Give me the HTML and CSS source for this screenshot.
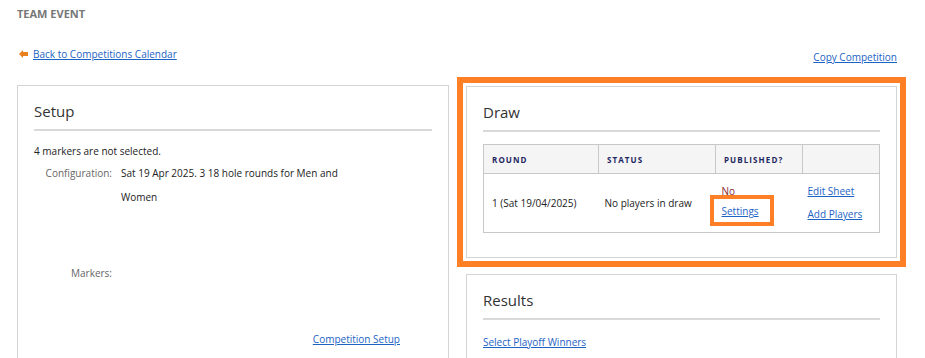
FILE: index.html
```html
<!DOCTYPE html>
<html lang="en">

<head>
    <meta charset="UTF-8">
    <title>Team Event</title>
    <link rel="stylesheet" href="styles.css">
</head>

<body>
    <div class="page">
        <h1 class="page-title">TEAM EVENT</h1>

        <div class="nav-row">
            <a class="back-link" href="#">
                <svg class="back-arrow" width="9" height="8" viewBox="0 0 9 8">
                    <polygon points="0,4 4,0 4,2 9,2 9,6 4,6 4,8" fill="#e8801f" />
                </svg><span>Back to Competitions Calendar</span>
            </a>
            <a class="copy-link" href="#">Copy Competition</a>
        </div>

        <div class="columns">
            <div class="panel setup">
                <h2>Setup</h2>
                <p class="note">4 markers are not selected.</p>
                <div class="field">
                    <div class="label">Configuration:</div>
                    <div class="value">Sat 19 Apr 2025. 3 18 hole rounds for Men and Women</div>
                </div>
                <div class="field markers">
                    <div class="label">Markers:</div>
                    <div class="value"></div>
                </div>
                <div class="panel-foot">
                    <a href="#">Competition Setup</a>
                </div>
            </div>

            <div class="side">
                <div class="panel draw highlighted">
                    <h2>Draw</h2>
                    <table class="draw-table">
                        <thead>
                            <tr>
                                <th class="c-round">Round</th>
                                <th class="c-status">Status</th>
                                <th class="c-pub">Published?</th>
                                <th class="c-act"></th>
                            </tr>
                        </thead>
                        <tbody>
                            <tr>
                                <td class="first">1 (Sat 19/04/2025)</td>
                                <td>No players in draw</td>
                                <td class="pub">
                                    <div class="pub-no">No</div>
                                    <div><span class="callout"><a href="#">Settings</a></span></div>
                                </td>
                                <td class="acts">
                                    <div class="act"><a href="#">Edit Sheet</a></div>
                                    <div class="act"><a href="#">Add Players</a></div>
                                </td>
                            </tr>
                        </tbody>
                    </table>
                </div>

                <div class="panel results">
                    <h2>Results</h2>
                    <a href="#">Select Playoff Winners</a>
                </div>
            </div>
        </div>
    </div>
</body>

</html>
```

FILE: styles.css
```css
/* Base */
body {
    margin: 0;
    font-family: 'Open Sans', Arial, sans-serif;
    font-size: 10px;
    color: #222;
    background: #fff;
}

a {
    color: #1d63c4;
    text-decoration: underline;
}

.page {
    width: 880px;
    padding: 0 0 0 17px;
}

.page-title {
    margin: 0;
    padding-top: 6px;
    font-size: 11px;
    font-weight: 700;
    color: #777;
    line-height: 16px;
}

.nav-row {
    display: flex;
    justify-content: space-between;
    align-items: flex-start;
    margin-top: 24px;
    height: 39px;
}

.back-link {
    display: flex;
    align-items: center;
    gap: 5px;
    padding-left: 2px;
    padding-top: 1px;
    line-height: 14px;
}

.copy-link {
    margin-top: 4px;
    line-height: 14px;
}

/* Columns */
.columns {
    display: flex;
    gap: 17px;
    align-items: flex-start;
}

.side {
    flex: 1;
    display: flex;
    flex-direction: column;
    gap: 16px;
}

.panel {
    border: 1px solid #d4d4d4;
    padding: 14px 16px 0 16px;
    background: #fff;
}

.panel h2 {
    margin: 0 0 8px 0;
    padding-bottom: 7px;
    border-bottom: 2px solid #d9d9d9;
    font-size: 15px;
    font-weight: 400;
    line-height: 22px;
    color: #333;
}

.setup {
    width: 398px;
    height: 300px;
}

.note {
    margin: 12px 0 2px 0;
    line-height: 16px;
}

.field {
    display: flex;
    gap: 9px;
    line-height: 24px;
}

.field .label {
    width: 78px;
    text-align: right;
    color: #666;
}

.field .value {
    width: 225px;
}

.markers {
    margin-top: 52px;
    height: 24px;
}

.panel-foot {
    margin-top: 47px;
    padding-right: 32px;
    text-align: right;
}

/* Draw */
.draw {
    margin-top: 1px;
    padding-bottom: 24px;
}

.highlighted {
    outline: 6px solid #ff7f27;
    outline-offset: 3px;
}

.draw-table {
    width: 100%;
    table-layout: fixed;
    border-collapse: collapse;
    border: 1px solid #c8c8c8;
    margin-top: 12px;
}

.draw-table th,
.draw-table td {
    box-sizing: border-box;
}

.draw-table th {
    background: #f5f5f5;
    border: 1px solid #c8c8c8;
    height: 29px;
    padding: 0 8px;
    text-align: left;
    font-size: 8px;
    font-weight: 700;
    letter-spacing: 1.1px;
    text-transform: uppercase;
    color: #1e2760;
}

.c-round {
    width: 115px;
}

.c-status {
    width: 117px;
}

.c-pub {
    width: 87px;
}

.draw-table td {
    height: 59px;
    padding: 0 4px 0 6px;
    vertical-align: middle;
}

.draw-table td.first {
    padding-left: 8px;
}

.draw-table td.pub {
    padding-bottom: 6px;
}

.draw-table td.acts {
    padding-left: 5px;
}

.pub-no {
    color: #8a2630;
    line-height: 18px;
    margin-bottom: 3px;
}

.callout {
    position: relative;
    line-height: 16px;
}

.callout::after {
    content: "";
    position: absolute;
    left: -12px;
    right: -15px;
    top: -9px;
    bottom: -8px;
    border: 4px solid #ff7f27;
}

.act {
    line-height: 23px;
}

/* Results */
.results {
    height: 80px;
}

.results a {
    display: inline-block;
    margin-top: 7px;
}
```
